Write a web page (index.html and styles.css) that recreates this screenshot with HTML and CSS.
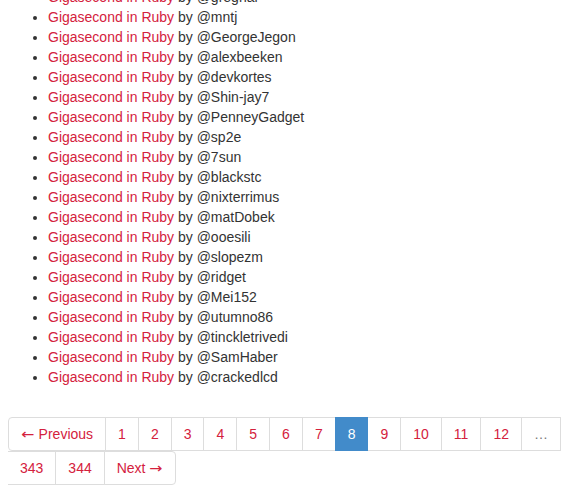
FILE: index.html
```html
<!DOCTYPE html>
<html>
<head>
<meta charset="utf-8">
<link rel="stylesheet" href="styles.css">
</head>
<body>
<ul class="solutions">
  <li><a href="#">Gigasecond in Ruby</a> by @gregnar</li>
  <li><a href="#">Gigasecond in Ruby</a> by @mntj</li>
  <li><a href="#">Gigasecond in Ruby</a> by @GeorgeJegon</li>
  <li><a href="#">Gigasecond in Ruby</a> by @alexbeeken</li>
  <li><a href="#">Gigasecond in Ruby</a> by @devkortes</li>
  <li><a href="#">Gigasecond in Ruby</a> by @Shin-jay7</li>
  <li><a href="#">Gigasecond in Ruby</a> by @PenneyGadget</li>
  <li><a href="#">Gigasecond in Ruby</a> by @sp2e</li>
  <li><a href="#">Gigasecond in Ruby</a> by @7sun</li>
  <li><a href="#">Gigasecond in Ruby</a> by @blackstc</li>
  <li><a href="#">Gigasecond in Ruby</a> by @nixterrimus</li>
  <li><a href="#">Gigasecond in Ruby</a> by @matDobek</li>
  <li><a href="#">Gigasecond in Ruby</a> by @ooesili</li>
  <li><a href="#">Gigasecond in Ruby</a> by @slopezm</li>
  <li><a href="#">Gigasecond in Ruby</a> by @ridget</li>
  <li><a href="#">Gigasecond in Ruby</a> by @Mei152</li>
  <li><a href="#">Gigasecond in Ruby</a> by @utumno86</li>
  <li><a href="#">Gigasecond in Ruby</a> by @tinckletrivedi</li>
  <li><a href="#">Gigasecond in Ruby</a> by @SamHaber</li>
  <li><a href="#">Gigasecond in Ruby</a> by @crackedlcd</li>
</ul>
<ul class="pagination">
  <li class="first"><a href="#"><span class="arrow">←</span> Previous</a></li>
  <li><a href="#">1</a></li>
  <li><a href="#">2</a></li>
  <li><a href="#">3</a></li>
  <li><a href="#">4</a></li>
  <li><a href="#">5</a></li>
  <li><a href="#">6</a></li>
  <li><a href="#">7</a></li>
  <li class="active"><span>8</span></li>
  <li><a href="#">9</a></li>
  <li><a href="#">10</a></li>
  <li><a href="#">11</a></li>
  <li><a href="#">12</a></li>
  <li class="disabled"><span>…</span></li>
  <li><a href="#">343</a></li>
  <li><a href="#">344</a></li>
  <li class="last"><a href="#">Next <span class="arrow">→</span></a></li>
</ul>
</body>
</html>
```
FILE: styles.css
```css
html, body {
  background: #fff;
}
body {
  margin: 0 8px;
  font-family: "Liberation Sans", Arial, sans-serif;
  font-size: 14px;
  line-height: 20px;
  color: #333;
}
a {
  color: #d4213d;
  text-decoration: none;
}
.solutions {
  margin: -13px 0 10px;
  padding-left: 40px;
}
.pagination {
  display: flex;
  flex-wrap: wrap;
  list-style: none;
  padding: 0;
  margin: 30px 0 20px;
}
.pagination li > a,
.pagination li > span {
  display: block;
  padding: 6px 12px;
  line-height: 20px;
  border: 1px solid #ddd;
  margin-left: -1px;
  background: #fff;
}
.arrow {
  display: inline-block;
  margin: 0 1px;
  font-family: "DejaVu Sans", sans-serif;
  transform: scaleX(1.12);
}
.pagination li.first > a {
  margin-left: 0;
  border-radius: 4px 0 0 4px;
}
.pagination li.last > a {
  border-radius: 0 4px 4px 0;
}
.pagination li.active > span {
  background: #428bca;
  border-color: #428bca;
  color: #fff;
  position: relative;
}
.pagination li.disabled > span {
  color: #777;
}
```
